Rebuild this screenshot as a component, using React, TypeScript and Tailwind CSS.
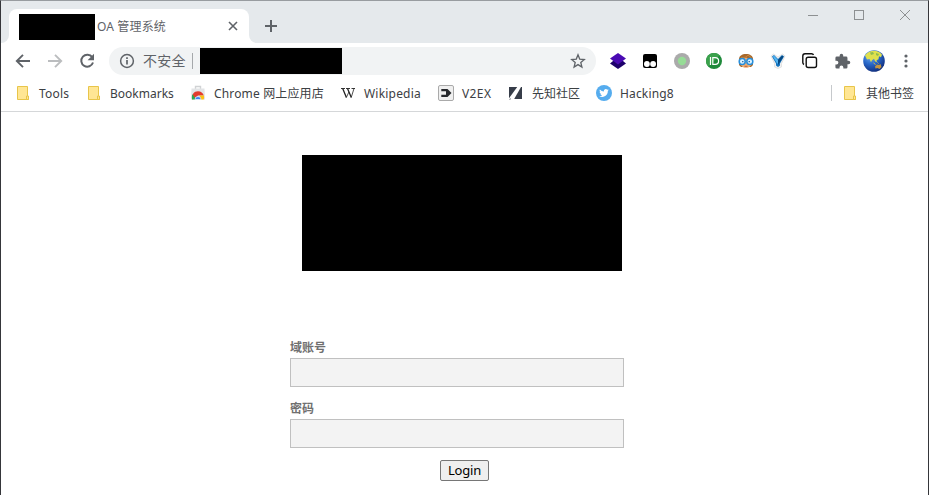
import type { ReactNode } from 'react';

const FolderIcon = () => (
  <svg width="16" height="16" viewBox="0 0 16 16">
    <path d="M2.500 1.500h10v9.500l1 .5v3h-11z" fill="#ffe694" stroke="#e8c54a" />
    <path d="M11.500 14.500v-3.500h2v3.500z" fill="#ffe694" stroke="#e8c54a" />
  </svg>
);

const StoreIcon = () => (
  <svg width="16" height="16" viewBox="0 0 16 16">
    <path d="M5.500 4V1.500h5V4" fill="none" stroke="#d0d2d4" strokeWidth="1.400" />
    <path d="M1.500 3.500h13l.5 11H1z" fill="#e2e4e6" />
    <path d="M2.300 14.500C1.400 9.500 4 6.300 8 6.300c3 0 5 1.600 5.800 4.200H8L6.300 12z" fill="#e33b2e" />
    <path d="M2.600 9.200 6 14.500H2.200C1.600 12.500 1.800 10.500 2.600 9.200z" fill="#2ca94f" />
    <path d="M10 10.500h3.900c.4 1.500.2 2.800-.2 4H9z" fill="#fbc116" />
    <path d="M5 14.500a3 3 0 0 1 6 0z" fill="#3f82f0" stroke="#fff" strokeWidth=".6" />
  </svg>
);

const WikiIcon = () => (
  <svg width="16" height="16" viewBox="0 0 16 16" fill="none" stroke="#222">
    <path d="M1 3.500h4M6 3.500h4M11.500 3.500H15" strokeWidth=".9" />
    <path d="m2.700 3.500 3.700 9M7.500 3.500l3.800 9" strokeWidth="1.300" />
    <path d="m6.300 12.500 2.600-5.500M11.200 12.500l2.800-9" strokeWidth=".8" />
  </svg>
);

const V2exIcon = () => (
  <svg width="16" height="16" viewBox="0 0 16 16">
    <rect x=".5" y=".5" width="15" height="15" rx="1.500" fill="#f0f0f0" stroke="#aaa" />
    <path d="M3.300 4h6.200l4 4-4 4H3.300V9.800H8V6.300H3.300z" fill="#26282c" />
  </svg>
);

const XianzhiIcon = () => (
  <svg width="16" height="16" viewBox="0 0 16 16" fill="#373d49">
    <path d="M1 2h8.200L1 13.300z" />
    <path d="M14 2v12H6.200L13 2z" />
    <path d="M1 14.600 2.200 13.500 3 13.700 2.300 14.600z" />
  </svg>
);

const BirdIcon = () => (
  <svg width="16" height="16" viewBox="0 0 16 16">
    <circle cx="8" cy="8" r="8" fill="#55acee" />
    <path
      transform="translate(3.200 3.200) scale(.4)"
      fill="#fff"
      d="M23.950 4.570a10 10 0 0 1-2.820.770 4.960 4.960 0 0 0 2.160-2.720 9.900 9.900 0 0 1-3.120 1.190 4.920 4.920 0 0 0-8.380 4.480A13.980 13.980 0 0 1 1.640 3.160a4.920 4.920 0 0 0 1.520 6.570 4.900 4.900 0 0 1-2.230-.610v.060a4.920 4.920 0 0 0 3.950 4.830 5 5 0 0 1-2.210.080 4.940 4.940 0 0 0 4.600 3.420A9.870 9.870 0 0 1 0 19.540a13.990 13.990 0 0 0 7.550 2.210c9.050 0 14-7.500 14-13.980l-.020-.630a9.940 9.940 0 0 0 2.420-2.570z"
    />
  </svg>
);

const LayersIcon = () => (
  <svg width="16" height="16" viewBox="0 0 16 16">
    <path d="M0 10.500 3 8h10l3 2.500L8 16z" fill="#1d006b" />
    <path d="M0 5.500 8 0l8 5.500-8 6z" fill="#4a0ab3" />
  </svg>
);

const EyesIcon = () => (
  <svg width="16" height="16" viewBox="0 0 16 16">
    <rect x="1" y="1" width="14" height="14" rx="2" fill="#000" />
    <circle cx="4.900" cy="11" r="2.900" fill="#fff" />
    <circle cx="11.100" cy="11" r="2.900" fill="#fff" />
  </svg>
);

const DotIcon = () => (
  <svg width="16" height="16" viewBox="0 0 16 16">
    <circle cx="8" cy="8" r="8" fill="#aaa" />
    <circle cx="8" cy="8" r="4.200" fill="#96dc96" />
  </svg>
);

const PushIcon = () => (
  <svg width="16" height="16" viewBox="0 0 16 16">
    <circle cx="8" cy="8" r="8" fill="#1f8a3b" />
    <path d="M2.300 13.700A8 8 0 0 1 13.700 2.300z" fill="#3ba14c" />
    <path d="M4.500 4v8" stroke="#fff" strokeWidth="1.200" />
    <path d="M6.800 4.600h2.400a3.400 3.400 0 0 1 0 6.800H6.800z" fill="none" stroke="#fff" strokeWidth="1.200" />
  </svg>
);

const FaceIcon = () => (
  <svg width="16" height="16" viewBox="0 0 16 16">
    <path d="M1 12V6c0-3 3-5 7-5s7 2 7 5v6l-2 2H3z" fill="#a8682a" />
    <path d="M3 7 8 4.500 13 7v5c-1 2-3 2.800-5 2.800S4 14 3 12z" fill="#f0ad72" />
    <path d="M3 4.500C6 5 9 4 10 2l3.500 3" stroke="#c58540" fill="none" />
    <circle cx="4.200" cy="8.500" r="3" fill="#d9f2ff" stroke="#278edb" strokeWidth="1.500" />
    <circle cx="11.800" cy="8.500" r="3" fill="#d9f2ff" stroke="#278edb" strokeWidth="1.500" />
    <path d="M4.800 8v1.300M11.200 8v1.300" stroke="#14508c" strokeWidth="1.200" />
    <path d="M6.500 13.300h3" stroke="#b9623b" />
  </svg>
);

const YIcon = () => (
  <svg width="16" height="16" viewBox="0 0 16 16">
    <path d="M1 3 3.500 1 8 4l4.500-3L15 3l-3.500 7.500V14L8 15.500 4.500 14v-3.500z" fill="#f1f1f1" stroke="#ddd" strokeWidth=".8" />
    <path d="M2 3.500 4 2l4 4 4-4 2 1.500L10 10.500v2L8 14l-2-1.500v-2z" fill="#1474bf" />
    <path d="m2.800 3.400 1.300-.6L8 7v4L6.500 9.500z" fill="#54b5f2" />
    <path d="m12 2.800 1.500.8L9.500 9.800 8 12V7z" fill="#07477f" />
  </svg>
);

const CopyIcon = () => (
  <svg width="16" height="16" viewBox="0 0 16 16" fill="none" stroke="#111" strokeWidth="1.400">
    <rect x="4.200" y="4.200" width="10.300" height="10.300" rx="2" />
    <path d="M2 11.500C1 11 .8 10.500.8 9.500V3c0-1.400.8-2.200 2.200-2.200h6.500c1 0 1.700.3 2 1.200" />
  </svg>
);

const PuzzleIcon = () => (
  <svg width="17" height="17" viewBox="0 0 24 24" fill="#5f6368">
    <path d="M20.500 11H19V7a2 2 0 0 0-2-2h-4V3.500a2.500 2.500 0 0 0-5 0V5H4a2 2 0 0 0-2 2v3.800h1.500a2.700 2.700 0 0 1 0 5.400H2V20a2 2 0 0 0 2 2h3.800v-1.500a2.700 2.700 0 0 1 5.400 0V22H17a2 2 0 0 0 2-2v-4h1.500a2.500 2.500 0 0 0 0-5z" />
  </svg>
);

const GlobeIcon = () => (
  <svg width="22" height="22" viewBox="0 0 22 22">
    <defs>
      <radialGradient id="ocean" cx=".35" cy=".25" r=".8">
        <stop offset="0" stopColor="#78b2ea" />
        <stop offset=".5" stopColor="#2867c9" />
        <stop offset="1" stopColor="#102b79" />
      </radialGradient>
    </defs>
    <circle cx="11" cy="11" r="10.800" fill="url(#ocean)" />
    <path d="M2 5.500C4 2 8 .5 12 .7c3 .2 5.500 1.800 7 4l-1 2.500-2-1-.5 3-2 1 .5 2-2-1-1-2.500-2 1.500-1 2L6.500 9 4 9.500z" fill="#dfe04e" />
    <path d="M7 2.500 10 2l1 2-3 1zM13 3l3 1-1 2-2-1z" fill="#8fba51" />
    <path d="m12 16.500 2-2 2 .5 1.500-1 1 3-2 2-2-1-2 .5z" fill="#c49541" />
    <path d="m10.500 13 2 1.500M14.500 12.500l1 1" stroke="#d6bd47" />
  </svg>
);

const MenuIcon = () => (
  <svg width="16" height="16" viewBox="0 0 16 16" fill="#5f6368">
    <circle cx="8" cy="3" r="1.600" />
    <circle cx="8" cy="8" r="1.600" />
    <circle cx="8" cy="13" r="1.600" />
  </svg>
);

const BackIcon = () => (
  <svg width="16" height="16" viewBox="0 0 16 16" fill="none" stroke="currentColor" strokeWidth="1.900">
    <path d="M15 8H2.500M8 1.800 1.800 8 8 14.200" />
  </svg>
);

const ReloadIcon = () => (
  <svg width="16" height="16" viewBox="0 0 16 16">
    <path d="M13.200 4.200A6 6 0 1 0 14 9.500" fill="none" stroke="#5f6368" strokeWidth="2" />
    <path d="M15 .8v6.400H8.600z" fill="#5f6368" />
  </svg>
);

const extensions: ReactNode[] = [
  <LayersIcon />, <EyesIcon />, <DotIcon />, <PushIcon />, <FaceIcon />,
  <YIcon />, <CopyIcon />, <PuzzleIcon />, <GlobeIcon />, <MenuIcon />,
];

const bookmarks = [
  { label: 'Tools', icon: <FolderIcon />, width: 'w-[71px]', text: 'tracking-[0.2px]' },
  { label: 'Bookmarks', icon: <FolderIcon />, width: 'w-[104px]', text: '' },
  { label: 'Chrome 网上应用店', icon: <StoreIcon />, width: 'w-[150px]', text: 'tracking-[0.15px]' },
  { label: 'Wikipedia', icon: <WikiIcon />, width: 'w-[98px]', text: 'tracking-[0.2px]' },
  { label: 'V2EX', icon: <V2exIcon />, width: 'w-[70px]', text: 'tracking-[0.4px]' },
  { label: '先知社区', icon: <XianzhiIcon />, width: 'w-[88px]', text: '' },
  { label: 'Hacking8', icon: <BirdIcon />, width: 'w-[90px]', text: 'tracking-[0.15px]' },
];

function TabStrip() {
  return (
    <div className="flex h-[42px] bg-[#e5e9ec] pt-2">
      <div className="flex w-2 items-end bg-white">
        <div className="h-[34px] w-2 rounded-br-lg bg-[#e5e9ec]" />
      </div>
      <div className="flex h-[34px] w-[240px] items-start rounded-t-lg bg-white pt-[5px] pl-[10px]">
        <div className="h-[26px] w-[76px] bg-black" />
        <span className="ml-[2px] h-[26px] w-[131px] text-[12px] leading-[26px] tracking-[0.15px] whitespace-nowrap text-[#5f6368]">OA 管理系统</span>
        <svg className="mt-[7px]" width="10" height="10" viewBox="0 0 10 10" stroke="#5f6368" strokeWidth="1.600">
          <path d="m1 1 8 8M9 1 1 9" />
        </svg>
      </div>
      <div className="flex w-2 items-end bg-white">
        <div className="h-[34px] w-2 rounded-bl-lg bg-[#e5e9ec]" />
      </div>
      <svg className="mt-[11px] ml-2" width="12" height="12" viewBox="0 0 12 12" stroke="#5f6368" strokeWidth="2">
        <path d="M6 0v12M0 6h12" />
      </svg>
      <svg className="ml-auto mr-[17px]" width="104" height="12" viewBox="0 0 104 12" fill="none" stroke="#8d9092">
        <path d="M1 6.500h10M93 1l10 10M103 1 93 11" />
        <rect x="47.500" y="1.500" width="9" height="9" />
      </svg>
    </div>
  );
}

function Toolbar() {
  return (
    <div className="flex h-9 items-center pl-[6px]">
      <div className="flex w-8 justify-center text-[#5f6368]"><BackIcon /></div>
      <div className="flex w-8 justify-center text-[#bbbdbf]"><div className="rotate-180"><BackIcon /></div></div>
      <div className="flex w-8 justify-center"><ReloadIcon /></div>
      <div className="ml-[6px] flex h-7 w-[487px] items-center rounded-full bg-[#f1f3f4] pl-[10px]">
        <svg width="16" height="16" viewBox="0 0 16 16" fill="none" stroke="#5f6368" strokeWidth="1.500">
          <circle cx="8" cy="8" r="6.400" />
          <path d="M8 7v4.500M8 4.200v1.700" strokeWidth="1.700" />
        </svg>
        <span className="ml-2 w-[49px] text-[14px] leading-5 tracking-[0.2px] whitespace-nowrap text-[#5f6368]">不安全</span>
        <div className="h-4 w-px bg-[#a5a8ab]" />
        <div className="ml-[7px] h-[26px] w-[142px] bg-black" />
        <svg className="ml-[228px]" width="16" height="16" viewBox="0 0 16 16" fill="none" stroke="#5f6368" strokeWidth="1.300">
          <path d="m8 1.800 1.700 4.300 4.600.4-3.500 3 1.100 4.600L8 11.600l-3.900 2.500 1.100-4.600-3.500-3 4.600-.4z" />
        </svg>
      </div>
      <div className="ml-[6px] flex">
        {extensions.map((icon, i) => (
          <div key={i} className="flex h-8 w-8 items-center justify-center">{icon}</div>
        ))}
      </div>
    </div>
  );
}

function BookmarksBar() {
  return (
    <div className="flex h-[33px] items-center border-b border-[#d5d7d9] pb-1 pl-[14px] text-[12px] text-[#3c4043]">
      {bookmarks.map((b) => (
        <div key={b.label} className={`flex h-4 shrink-0 items-center gap-2 whitespace-nowrap ${b.width}`}>
          <span className="shrink-0">{b.icon}</span>
          <span className={`pt-[2px] ${b.text}`}>{b.label}</span>
        </div>
      ))}
      <div className="ml-[145px] h-4 w-px bg-[#c6c9cc]" />
      <div className="ml-[10px] flex h-4 items-center gap-2 whitespace-nowrap">
        <FolderIcon />
        <span className="pt-[2px]">其他书签</span>
      </div>
    </div>
  );
}

function LoginPage() {
  return (
    <div className="flex flex-1 flex-col items-start pt-[43px] pl-[289px]">
      <div className="ml-3 h-[116px] w-[320px] bg-black" />
      <form className="mt-[68px] flex w-[334px] flex-col text-[12px] font-bold text-[#707070]">
        <label htmlFor="account" className="h-[19px] leading-[18px]">域账号</label>
        <input id="account" className="h-[29px] border border-[#c0c0c0] bg-[#f3f3f3] px-2 outline-none" />
        <label htmlFor="password" className="mt-[13px] h-[19px] leading-[18px]">密码</label>
        <input id="password" type="password" className="h-[29px] border border-[#c0c0c0] bg-[#f3f3f3] px-2 outline-none" />
        <button type="button" className="mt-3 ml-[150px] h-[21px] w-[49px] rounded-[2px] border border-[#767676] bg-[#efefef] text-[13px] leading-[19px] font-normal tracking-[-0.2px] text-black">Login</button>
      </form>
    </div>
  );
}

export default function App() {
  return (
    <div className="flex h-[495px] w-[929px] flex-col overflow-hidden border-x border-t border-x-[#35363a] border-t-[#989ca0] bg-white font-['Noto_Sans','Noto_Sans_CJK_SC',sans-serif]">
      <TabStrip />
      <Toolbar />
      <BookmarksBar />
      <LoginPage />
    </div>
  );
}
